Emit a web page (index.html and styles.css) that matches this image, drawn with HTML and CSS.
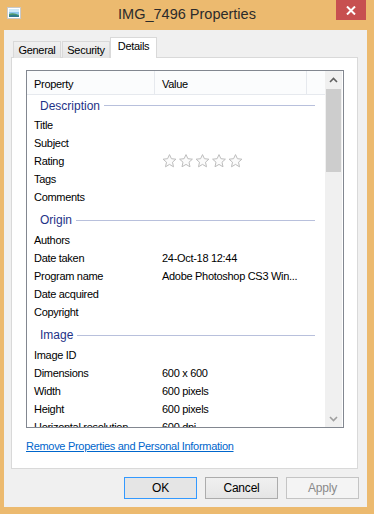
FILE: index.html
```html
<!DOCTYPE html>
<html lang="en">

<head>
    <meta charset="UTF-8">
    <meta name="viewport" content="width=device-width, initial-scale=1.0">
    <title>IMG_7496 Properties</title>
    <link rel="stylesheet" href="styles.css">
</head>

<body>
    <div class="window">
        <div class="titlebar">
            <svg class="app-icon" width="14" height="12" viewBox="0 0 14 12">
                <rect x="0.5" y="0.5" width="13" height="11" fill="#ffffff" stroke="#c9c9c9"/>
                <rect x="2" y="2" width="10" height="8" fill="#8fc7ec"/>
                <rect x="2" y="2" width="10" height="3" fill="#cfe9f8"/>
                <path d="M2 10 L2 7 Q6 5 12 8 L12 10 Z" fill="#4f9a6a"/>
                <path d="M2 10 L2 8.5 Q7 7 12 9 L12 10 Z" fill="#2f7a8e"/>
            </svg>
            <div class="title">IMG_7496 Properties</div>
            <div class="close-btn">
                <svg width="10" height="9" viewBox="0 0 10 9">
                    <path d="M1 0.5 L9 8.5 M9 0.5 L1 8.5" stroke="#ffffff" stroke-width="2"/>
                </svg>
            </div>
        </div>

        <div class="client">
            <div class="tabs">
                <div class="tab tab-general">General</div>
                <div class="tab tab-security">Security</div>
                <div class="tab tab-details active">Details</div>
            </div>

            <div class="panel">
                <div class="listbox">
                    <div class="list">
                        <div class="list-header">
                            <div class="col-prop">Property</div>
                            <div class="col-val">Value</div>
                            <div class="col-rest"></div>
                        </div>

                        <div class="group first"><span>Description</span></div>
                        <div class="row"><div class="col-prop">Title</div><div class="col-val"></div></div>
                        <div class="row"><div class="col-prop">Subject</div><div class="col-val"></div></div>
                        <div class="row">
                            <div class="col-prop">Rating</div>
                            <div class="col-val">
                                <svg class="stars" width="84" height="14" viewBox="0 0 84 14">
                                    <defs>
                                        <path id="star" d="M7 0.6 L8.9 4.7 L13.4 5.2 L10 8.2 L11 12.8 L7 10.4 L3 12.8 L4 8.2 L0.6 5.2 L5.1 4.7 Z" fill="#fbfbfb" stroke="#bdbdbd" stroke-width="1"/>
                                    </defs>
                                    <use href="#star" x="0.5"/>
                                    <use href="#star" x="17"/>
                                    <use href="#star" x="33.5"/>
                                    <use href="#star" x="50"/>
                                    <use href="#star" x="66.5"/>
                                </svg>
                            </div>
                        </div>
                        <div class="row"><div class="col-prop">Tags</div><div class="col-val"></div></div>
                        <div class="row"><div class="col-prop">Comments</div><div class="col-val"></div></div>

                        <div class="group"><span>Origin</span></div>
                        <div class="row"><div class="col-prop">Authors</div><div class="col-val"></div></div>
                        <div class="row"><div class="col-prop">Date taken</div><div class="col-val">24-Oct-18 12:44</div></div>
                        <div class="row"><div class="col-prop">Program name</div><div class="col-val">Adobe Photoshop CS3 Win...</div></div>
                        <div class="row"><div class="col-prop">Date acquired</div><div class="col-val"></div></div>
                        <div class="row"><div class="col-prop">Copyright</div><div class="col-val"></div></div>

                        <div class="group"><span>Image</span></div>
                        <div class="row"><div class="col-prop">Image ID</div><div class="col-val"></div></div>
                        <div class="row"><div class="col-prop">Dimensions</div><div class="col-val">600 x 600</div></div>
                        <div class="row"><div class="col-prop">Width</div><div class="col-val">600 pixels</div></div>
                        <div class="row"><div class="col-prop">Height</div><div class="col-val">600 pixels</div></div>
                        <div class="row"><div class="col-prop">Horizontal resolution</div><div class="col-val">600 dpi</div></div>
                    </div>

                    <div class="scrollbar">
                        <div class="scroll-btn">
                            <svg width="9" height="6" viewBox="0 0 9 6"><path d="M1 5 L4.5 1.5 L8 5" fill="none" stroke="#606060" stroke-width="1.6"/></svg>
                        </div>
                        <div class="scroll-track">
                            <div class="scroll-thumb"></div>
                        </div>
                        <div class="scroll-btn">
                            <svg width="9" height="6" viewBox="0 0 9 6"><path d="M1 1 L4.5 4.5 L8 1" fill="none" stroke="#a0a0a0" stroke-width="1.6"/></svg>
                        </div>
                    </div>
                </div>

                <a class="remove-link" href="#">Remove Properties and Personal Information</a>
            </div>

            <div class="buttons">
                <button class="btn default">OK</button>
                <button class="btn">Cancel</button>
                <button class="btn disabled">Apply</button>
            </div>
        </div>
    </div>
</body>

</html>
```

FILE: styles.css
```css
:root {
    --frame: #ecba6f;
    --client-bg: #f0f0f0;
    --tab-border: #d9d9d9;
    --group-color: #1e3287;
    --group-line: #b8c0dc;
    --ui-font: "Liberation Sans", Arial, sans-serif;
}

* {
    margin: 0;
    padding: 0;
    box-sizing: border-box;
}

body {
    width: 374px;
    height: 514px;
    overflow: hidden;
    background-color: var(--frame);
    font-family: var(--ui-font);
    font-size: 11px;
    letter-spacing: -0.3px;
    color: #000000;
}

.window {
    display: flex;
    flex-direction: column;
    height: 514px;
}

/* title bar */
.titlebar {
    height: 30px;
    display: flex;
    align-items: flex-start;
    position: relative;
}

.app-icon {
    margin: 7px 0 0 7px;
}

.title {
    position: absolute;
    left: 0;
    right: 0;
    top: 5px;
    text-align: center;
    font-size: 14.5px;
    letter-spacing: 0;
    line-height: 18px;
    color: #2b2b2b;
}

.close-btn {
    margin-left: auto;
    margin-right: 8px;
    width: 30px;
    height: 20px;
    background-color: #c75050;
    display: flex;
    align-items: center;
    justify-content: center;
    position: relative;
}

/* client area */
.client {
    flex: 1;
    margin: 0 7px 7px 4px;
    background-color: var(--client-bg);
    display: flex;
    flex-direction: column;
    padding: 7px 8px 7px 7px;
}

.tabs {
    display: flex;
    align-items: flex-end;
    padding-left: 2px;
    margin-bottom: -1px;
    position: relative;
    z-index: 1;
}

.tab {
    height: 17px;
    border: 1px solid var(--tab-border);
    border-bottom: none;
    background: linear-gradient(#f0f0f0, #e5e5e5);
    line-height: 16px;
    text-align: center;
}

.tab-general {
    width: 48px;
    margin-right: 1px;
}

.tab-security {
    width: 48px;
}

.tab-details {
    width: 47px;
}

.tab.active {
    height: 21px;
    background: #ffffff;
    line-height: 17px;
}

.panel {
    width: 347px;
    height: 412px;
    border: 1px solid var(--tab-border);
    background-color: #ffffff;
    padding: 12px 0 0 14px;
    display: flex;
    flex-direction: column;
}

/* details list */
.listbox {
    width: 318px;
    height: 358px;
    border: 1px solid #828790;
    display: flex;
}

.list {
    width: 298px;
    overflow: hidden;
}

.list-header {
    display: flex;
    height: 24px;
    background-color: #fbfcfd;
    border-bottom: 1px solid #e6e9ee;
    align-items: center;
}

.list-header > div {
    height: 100%;
    display: flex;
    align-items: center;
    padding-top: 2px;
    border-right: 1px solid #e6e9ee;
}

.list-header .col-rest {
    flex: 1;
    border-right: none;
}

.col-prop {
    width: 128px;
    padding-left: 7px;
    white-space: nowrap;
    overflow: hidden;
}

.col-val {
    width: 152px;
    padding-left: 7px;
    white-space: nowrap;
    overflow: hidden;
    display: flex;
    align-items: center;
}

.row {
    display: flex;
    height: 18px;
    line-height: 18px;
}

.group {
    display: flex;
    align-items: center;
    height: 25px;
    padding: 3px 10px 0 13px;
    font-size: 12px;
    letter-spacing: 0;
    color: var(--group-color);
}

.group.first {
    height: 21px;
    padding-top: 0;
}

.group span {
    padding-right: 4px;
}

.group::after {
    content: "";
    flex: 1;
    height: 1px;
    background-color: var(--group-line);
}

.stars {
    display: block;
}

/* scrollbar */
.scrollbar {
    width: 17px;
    background-color: #f0f0f0;
    display: flex;
    flex-direction: column;
}

.scroll-btn {
    height: 17px;
    display: flex;
    align-items: center;
    justify-content: center;
}

.scroll-track {
    flex: 1;
    padding: 1px 1px 0;
}

.scroll-thumb {
    height: 83px;
    background-color: #cdcdcd;
}

.remove-link {
    margin-top: 11px;
    line-height: 15px;
    color: #0066cc;
    text-decoration: underline;
    align-self: flex-start;
}

/* dialog buttons */
.buttons {
    display: flex;
    justify-content: flex-end;
    gap: 8px;
    margin-top: 8px;
}

.btn {
    width: 73px;
    height: 22px;
    border: 1px solid #acacac;
    background: linear-gradient(#f0f0f0, #e5e5e5);
    font-family: var(--ui-font);
    font-size: 12px;
    letter-spacing: -0.2px;
    color: #000000;
}

.btn.default {
    border-color: #3399ff;
    background: #e5e5e5;
}

.btn.disabled {
    border-color: #c4c4c4;
    background: #f4f4f4;
    color: #8a8a8a;
}
```
